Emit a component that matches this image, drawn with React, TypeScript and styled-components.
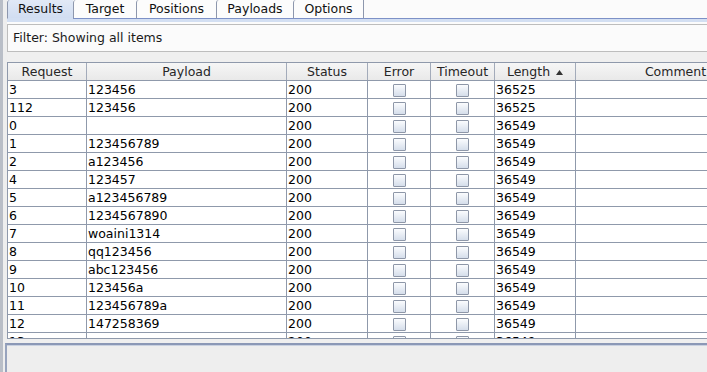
import React from 'react';
import styled, { createGlobalStyle } from 'styled-components';

const GlobalStyle = createGlobalStyle`
  html, body { margin: 0; padding: 0; background: #eeeeee; }
  body {
    font-family: "DejaVu Sans", "Noto Sans", sans-serif;
    font-size: 12.5px;
    color: #000;
  }
  #root { width: 707px; height: 372px; overflow: hidden; }
`;

const GRID = '#8f99ab';
const COLS = '79px 200px 81px 63px 64px 81px 200px';

const Root = styled.div`
  display: flex;
  width: 707px;
  height: 372px;
  overflow: hidden;
  background: #eeeeee;
`;

const SideStrip = styled.div`
  flex: none;
  width: 3px;
  background: #b9bec7;
`;

const Main = styled.div`
  flex: 1;
  min-width: 0;
  display: flex;
  flex-direction: column;
`;

const TabbedPanel = styled.div`
  margin-left: 4px;
  display: flex;
  flex-direction: column;
`;

const TabBar = styled.div`
  display: flex;
  height: 19px;
  background: #fbfbfb;
`;

const Tab = styled.div<{ $w: number; $selected?: boolean; $last?: boolean }>`
  flex: none;
  box-sizing: border-box;
  width: ${(p) => p.$w}px;
  height: 19px;
  line-height: 17px;
  text-align: center;
  color: #111;
  white-space: nowrap;
  border-left: 1px solid #8d97ad;
  ${(p) => (p.$last ? 'border-right: 1px solid #8d97ad;' : '')}
  border-bottom: 1px solid ${(p) => (p.$selected ? '#d3dff2' : '#7d91c7')};
  border-top-left-radius: 3px;
  background: ${(p) =>
    p.$selected ? 'linear-gradient(#e1e9f6, #d1ddf1)' : '#fcfcfc'};
`;

const TabFiller = styled.div`
  flex: 1;
  border-bottom: 1px solid #7d91c7;
`;

const Band = styled.div`
  height: 3px;
  background: #d3dff2;
`;

const FilterWrap = styled.div`
  padding-top: 2px;
  background: #fbfbfb;
`;

const FilterBox = styled.div`
  box-sizing: border-box;
  height: 28px;
  border: 1px solid #bdbdbd;
  border-right: none;
  padding-left: 5px;
  line-height: 26px;
  color: #1a1a1a;
  background: #fbfbfb;
  white-space: nowrap;
`;

const Gap = styled.div<{ $h: number; $bg?: string }>`
  flex: none;
  height: ${(p) => p.$h}px;
  background: ${(p) => p.$bg ?? '#efefef'};
`;

const TableFrame = styled.div`
  box-sizing: border-box;
  height: 277px;
  border: 1px solid ${GRID};
  border-right: none;
  overflow: hidden;
  background: #ffffff;
`;

const HeaderRow = styled.div`
  display: grid;
  grid-template-columns: ${COLS};
  box-sizing: border-box;
  height: 18px;
  border-bottom: 1px solid ${GRID};
  background: linear-gradient(#f6f6f6, #e9e9e9);
`;

const HeaderCell = styled.div`
  box-sizing: border-box;
  border-right: 1px solid #a3abba;
  line-height: 17px;
  text-align: center;
  color: #262626;
  white-space: nowrap;
  overflow: hidden;
`;

const Row = styled.div`
  display: grid;
  grid-template-columns: ${COLS};
  box-sizing: border-box;
  height: 18px;
  border-bottom: 1px solid ${GRID};
`;

const Cell = styled.div<{ $center?: boolean }>`
  box-sizing: border-box;
  border-right: 1px solid ${GRID};
  padding-left: ${(p) => (p.$center ? 0 : 1)}px;
  line-height: 17px;
  white-space: nowrap;
  overflow: hidden;
  display: flex;
  justify-content: ${(p) => (p.$center ? 'center' : 'flex-start')};
`;

const CheckBox = styled.div`
  box-sizing: border-box;
  width: 13px;
  height: 13px;
  margin-top: 3px;
  border: 1px solid #8e97a8;
  border-radius: 1px;
  background: linear-gradient(#fbfcfe, #d5deeb);
`;

const SortArrow = styled.svg`
  margin-left: 6px;
  vertical-align: 1px;
`;

const BottomPane = styled.div`
  flex: 1;
  margin-left: 2px;
  border-top: 2px solid #8b98b6;
  border-left: 2px solid #97a3bd;
  box-shadow: inset 0 1px 0 #c9d1e0;
  background: #eeeeee;
`;

type Item = { req: string; payload: string; status: string; length: string };

const rows: Item[] = [
  { req: '3', payload: '123456', status: '200', length: '36525' },
  { req: '112', payload: '123456', status: '200', length: '36525' },
  { req: '0', payload: '', status: '200', length: '36549' },
  { req: '1', payload: '123456789', status: '200', length: '36549' },
  { req: '2', payload: 'a123456', status: '200', length: '36549' },
  { req: '4', payload: '123457', status: '200', length: '36549' },
  { req: '5', payload: 'a123456789', status: '200', length: '36549' },
  { req: '6', payload: '1234567890', status: '200', length: '36549' },
  { req: '7', payload: 'woaini1314', status: '200', length: '36549' },
  { req: '8', payload: 'qq123456', status: '200', length: '36549' },
  { req: '9', payload: 'abc123456', status: '200', length: '36549' },
  { req: '10', payload: '123456a', status: '200', length: '36549' },
  { req: '11', payload: '123456789a', status: '200', length: '36549' },
  { req: '12', payload: '147258369', status: '200', length: '36549' },
  { req: '13', payload: '', status: '200', length: '36549' },
];

const tabs = [
  { label: 'Results', w: 66, selected: true },
  { label: 'Target', w: 63 },
  { label: 'Positions', w: 80 },
  { label: 'Payloads', w: 77 },
  { label: 'Options', w: 71, last: true },
];

export default function App() {
  return (
    <>
      <GlobalStyle />
      <Root>
        <SideStrip />
        <Main>
          <TabbedPanel>
            <TabBar>
              {tabs.map((t) => (
                <Tab key={t.label} $w={t.w} $selected={t.selected} $last={t.last}>
                  {t.label}
                </Tab>
              ))}
              <TabFiller />
            </TabBar>
            <Band />
            <FilterWrap>
              <FilterBox>Filter: Showing all items</FilterBox>
            </FilterWrap>
            <Gap $h={10} />
            <TableFrame>
              <HeaderRow>
                <HeaderCell>Request</HeaderCell>
                <HeaderCell>Payload</HeaderCell>
                <HeaderCell>Status</HeaderCell>
                <HeaderCell>Error</HeaderCell>
                <HeaderCell>Timeout</HeaderCell>
                <HeaderCell>
                  Length
                  <SortArrow width="7" height="5" viewBox="0 0 7 5">
                    <path d="M0 5 L3.5 0 L7 5 Z" fill="#333" />
                  </SortArrow>
                </HeaderCell>
                <HeaderCell>Comment</HeaderCell>
              </HeaderRow>
              {rows.map((r, i) => (
                <Row key={i}>
                  <Cell>{r.req}</Cell>
                  <Cell>{r.payload}</Cell>
                  <Cell>{r.status}</Cell>
                  <Cell $center>
                    <CheckBox />
                  </Cell>
                  <Cell $center>
                    <CheckBox />
                  </Cell>
                  <Cell>{r.length}</Cell>
                  <Cell />
                </Row>
              ))}
            </TableFrame>
          </TabbedPanel>
          <Gap $h={4} />
          <BottomPane />
        </Main>
      </Root>
    </>
  );
}
